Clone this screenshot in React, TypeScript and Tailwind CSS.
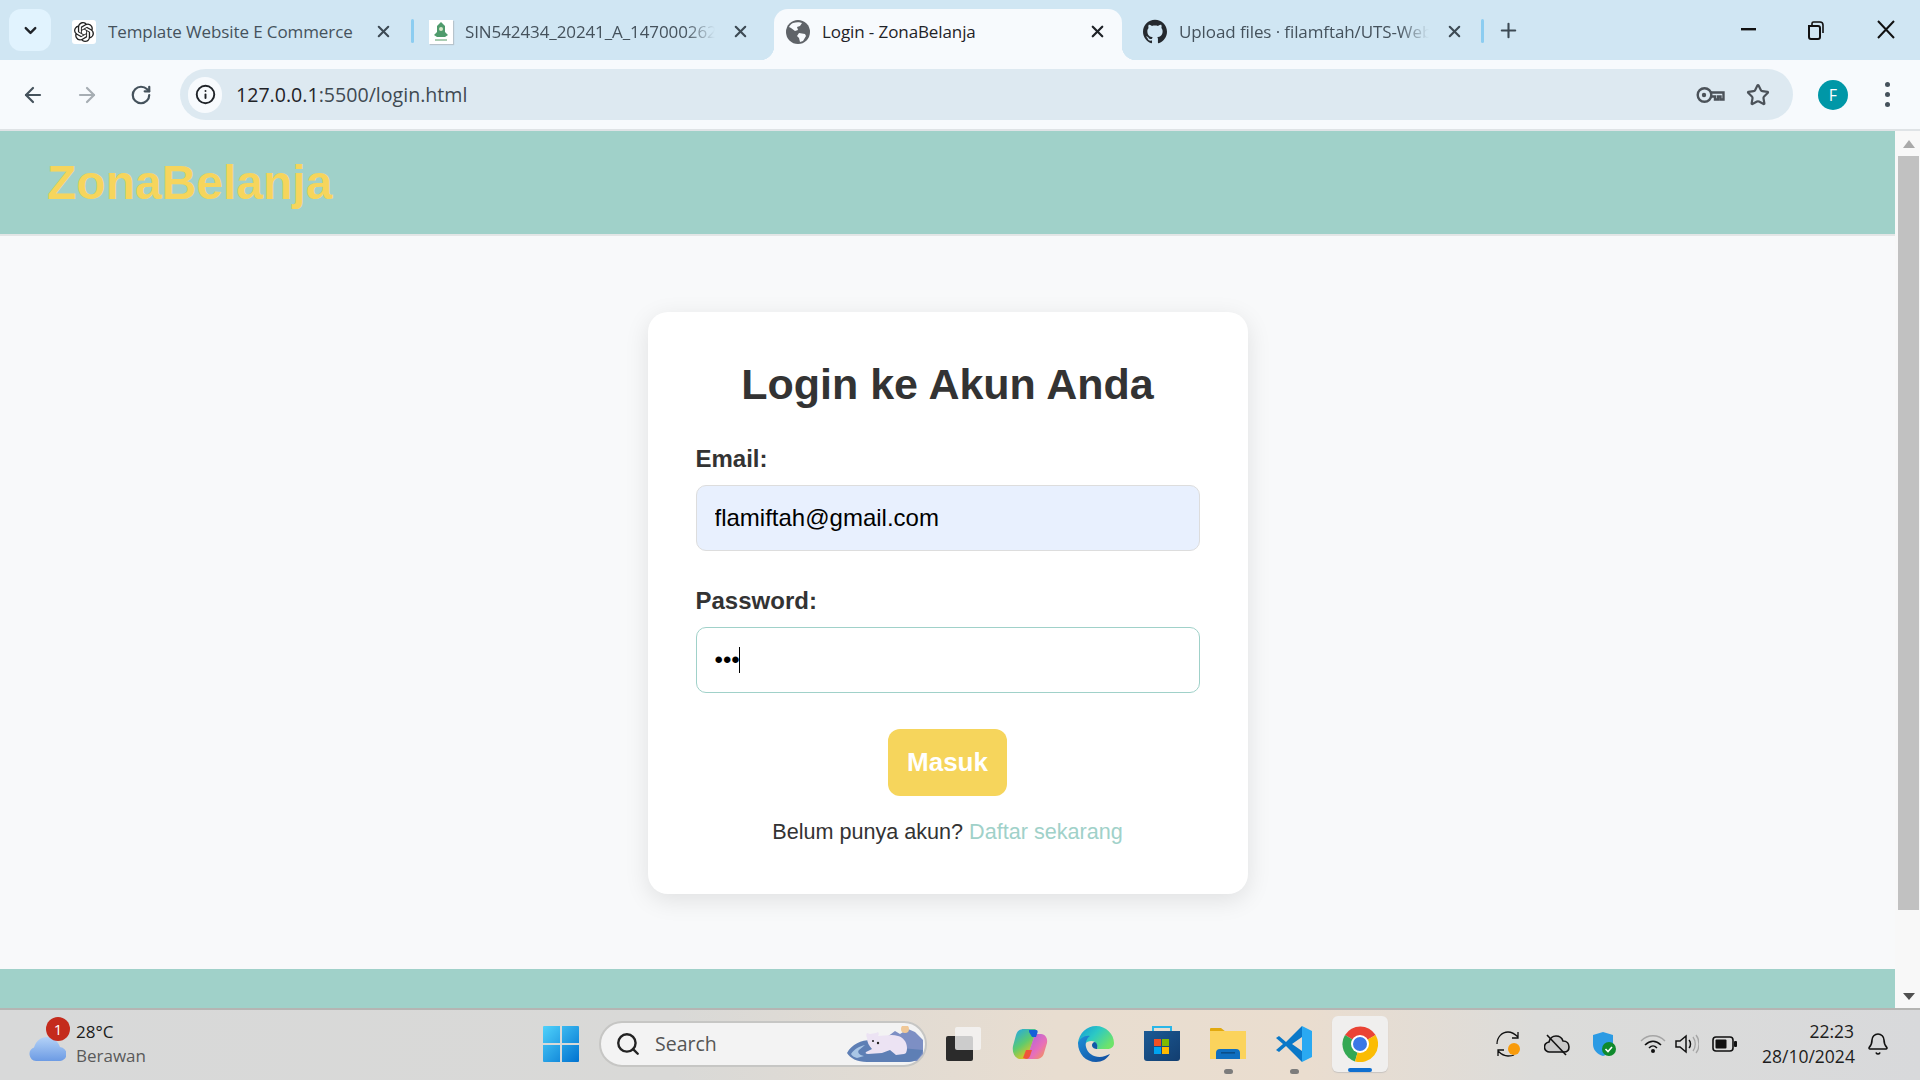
import { ArrowLeft, ArrowRight, ChevronDown, Info, Plus, RotateCw, Search, Star, X, Bell } from "lucide-react";
import { SiOpenai, SiGithub } from "react-icons/si";

const TEAL = "bg-[#a0d1c9]";

function Globe() {
  return (
    <svg width="24" height="24" viewBox="0 0 24 24">
      <circle cx="12" cy="12" r="12" fill="#5f6368" />
      <path d="M7 3c3-1 7-1 9 0l-2 3-3 1 1 3-3 1-4-3-2-1c1-2 2-3 4-4z" fill="#f7fafd" />
      <path d="M13 13l6 1 1 2-3 5-3 1-1-4-2-2 2-3z" fill="#f7fafd" />
    </svg>
  );
}

function UnimaFavicon() {
  return (
    <div className="flex h-6 w-6 items-center justify-center bg-white shadow-[1px_1px_1px_#b7c4cc]">
      <svg width="18" height="22" viewBox="0 0 18 22">
        <path d="M9 1l4 4v6l3 3-3 2H5l-3-2 3-3V5z" fill="#4f9b6c" />
        <circle cx="9" cy="8" r="2" fill="#d9e8c8" />
        <rect x="3" y="18" width="12" height="2" fill="#a9cdb2" />
      </svg>
    </div>
  );
}

type TabProps = {
  title: string;
  icon: React.ReactNode;
  titleWidth: string;
  closeGap: string;
  fade?: boolean;
};

function Tab({ title, icon, titleWidth, closeGap, fade }: TabProps) {
  return (
    <div className="flex h-[51px] shrink-0 items-center pb-[6px]">
      <div className="flex h-6 w-6 items-center justify-center">{icon}</div>
      <span
        className={`ml-3 overflow-hidden whitespace-nowrap text-[17px] tracking-[-0.1px] text-[#45525c] ${titleWidth} ${
          fade ? "[mask-image:linear-gradient(to_right,black_88%,transparent)]" : ""
        }`}
      >
        {title}
      </span>
      <X size={19} strokeWidth={2.6} className={`text-[#3d4a54] ${closeGap}`} />
    </div>
  );
}

function TabStrip() {
  return (
    <div className="flex h-[60px] shrink-0 items-end bg-[#d0e6f3] font-['Open_Sans',sans-serif]">
      <div className="mb-[9px] ml-[9px] flex h-[42px] w-[42px] items-center justify-center rounded-xl bg-[#e1f3fe]">
        <ChevronDown size={19} strokeWidth={3} className="text-[#1f2328]" />
      </div>
      <div className="ml-[21px]">
        <Tab
          title="Template Website E Commerce"
          icon={
            <div className="flex h-6 w-6 items-center justify-center rounded-[3px] bg-white">
              <SiOpenai size={20} className="text-[#222]" />
            </div>
          }
          titleWidth="w-[252px]"
          closeGap="ml-[14px]"
        />
      </div>
      <div className="mb-[17px] ml-[18px] h-6 w-[3px] rounded-full bg-[#8ccdf1]" />
      <div className="ml-[15px]">
        <Tab
          title="SIN542434_20241_A_147000262"
          icon={<UnimaFavicon />}
          titleWidth="w-[250px]"
          closeGap="ml-4"
          fade
        />
      </div>
      <div className="relative ml-6 flex h-[51px] w-[348px] shrink-0 items-center rounded-t-[14px] bg-[#f7fafd] pb-[6px] pl-[12px]">
        <div className="absolute bottom-0 left-[-14px] h-[14px] w-[14px] bg-[radial-gradient(circle_at_0_0,transparent_14px,#f7fafd_14.5px)]" />
        <div className="absolute bottom-0 right-[-14px] h-[14px] w-[14px] bg-[radial-gradient(circle_at_100%_0,transparent_14px,#f7fafd_14.5px)]" />
        <Globe />
        <span className="ml-3 w-[266px] whitespace-nowrap text-[17px] tracking-[-0.1px] text-[#1f2328]">Login - ZonaBelanja</span>
        <X size={19} strokeWidth={2.8} className="text-[#1f2328]" />
      </div>
      <div className="ml-[21px]">
        <Tab
          title="Upload files · filamftah/UTS-Web"
          icon={<SiGithub size={25} className="text-[#24292e]" />}
          titleWidth="w-[250px]"
          closeGap="ml-4"
          fade
        />
      </div>
      <div className="mb-[17px] ml-[17px] h-6 w-[3px] rounded-full bg-[#8ccdf1]" />
      <Plus size={23} strokeWidth={2.2} className="mb-[18px] ml-[13px] text-[#3d4a54]" />
      <div className="mb-[16px] ml-auto flex items-center">
        <svg width="68" height="28" viewBox="0 0 68 28" className="-mr-[2px]">
          <rect x="27" y="12" width="15" height="2.4" fill="#111" />
        </svg>
        <svg width="68" height="28" viewBox="0 0 68 28">
          <path d="M29 10h9a2 2 0 0 1 2 2v9a2 2 0 0 1-2 2h-7a2 2 0 0 1-2-2z" fill="none" stroke="#111" strokeWidth="2" />
          <path d="M32 9V7.5A1.5 1.5 0 0 1 33.5 6H40a3 3 0 0 1 3 3v8" fill="none" stroke="#111" strokeWidth="1.6" />
        </svg>
        <svg width="70" height="28" viewBox="0 0 70 28" className="mr-[2px]">
          <path d="M30 5l16 17M46 5L30 22" stroke="#111" strokeWidth="2" />
        </svg>
      </div>
    </div>
  );
}

function KeyIcon() {
  return (
    <svg width="29" height="20" viewBox="0 0 29 20" fill="none" stroke="#4b5259" strokeWidth="2.4">
      <circle cx="8.5" cy="10" r="6.8" />
      <circle cx="8" cy="10" r="2.2" fill="#4b5259" stroke="none" />
      <path d="M15 7.5h12.5v7h-3v-3h-2.5v3h-3v-3h-4" />
    </svg>
  );
}

function Toolbar() {
  return (
    <div className="relative flex h-[71px] shrink-0 items-start border-b-2 border-[#dfe3e6] bg-[#f7fafd] pt-[9px] font-['Open_Sans',sans-serif]">
      <div className="flex h-[51px] w-[180px] items-center pl-[21px]">
        <ArrowLeft size={24} strokeWidth={2.2} className="text-[#45525c]" />
        <ArrowRight size={24} strokeWidth={2.2} className="ml-[30px] text-[#a6adb3]" />
        <RotateCw size={22} strokeWidth={2.4} className="ml-[31px] text-[#45525c]" />
      </div>
      <div className="flex h-[51px] w-[1613px] items-center rounded-full bg-[#dde9f1] pl-2">
        <div className="flex h-9 w-[34px] items-center justify-center rounded-full bg-[#f7fafd]">
          <Info size={21} strokeWidth={2.2} className="text-[#1f2328]" />
        </div>
        <span className="ml-[14px] text-[19.6px] text-[#1f2328]">
          127.0.0.1<span className="text-[#3f4a52]">:5500/login.html</span>
        </span>
        <div className="ml-auto flex items-center pr-[23px]">
          <KeyIcon />
          <Star size={24} strokeWidth={2.2} className="ml-[21px] text-[#4b5259]" />
        </div>
      </div>
      <div className="flex h-[51px] items-center">
        <div className="ml-[25px] flex h-[30px] w-[30px] items-center justify-center rounded-full bg-[#0097a7] text-[16px] text-white">
          F
        </div>
        <div className="ml-[37px] flex flex-col gap-[5px]">
          <div className="h-[5px] w-[5px] rounded-full bg-[#45525c]" />
          <div className="h-[5px] w-[5px] rounded-full bg-[#45525c]" />
          <div className="h-[5px] w-[5px] rounded-full bg-[#45525c]" />
        </div>
      </div>
    </div>
  );
}

function Scrollbar() {
  return (
    <div className="flex w-[25px] shrink-0 flex-col items-center bg-[#f8f8f8] pl-[2px]">
      <div className="flex h-[25px] items-center justify-center">
        <div className="h-0 w-0 border-x-[6px] border-b-[8px] border-x-transparent border-b-[#a9a9a9]" />
      </div>
      <div className="h-[754px] w-[21px] bg-[#c1c1c1]" />
      <div className="flex flex-1 items-end justify-center pb-[8px]">
        <div className="h-0 w-0 border-x-[6px] border-t-[7px] border-x-transparent border-t-[#505050]" />
      </div>
    </div>
  );
}

function LoginCard() {
  return (
    <div className="mx-auto mt-[76px] w-[600px] rounded-[20px] bg-white px-12 pb-12 pt-[48px] shadow-[0_6px_24px_rgba(0,0,0,0.1)]">
      <h2 className="text-center text-[43px] font-bold leading-[48px] text-[#333]">Login ke Akun Anda</h2>
      <label className="mt-[37px] block text-[24px] font-bold leading-7 text-[#333]">Email:</label>
      <input
        readOnly
        value="flamiftah@gmail.com"
        className="mt-3 block h-[66px] w-full rounded-[10px] border border-[#ddd] bg-[#e8f0fe] pl-[18px] text-[24px] text-black outline-none"
      />
      <label className="mt-9 block text-[24px] font-bold leading-7 text-[#333]">Password:</label>
      <div className="relative mt-3">
        <input
          readOnly
          type="password"
          value="abc"
          className="block h-[66px] w-full rounded-[10px] border border-[#a0d1c9] bg-white pl-[18px] text-[24px] text-black outline-none"
        />
        <div className="absolute left-[43px] top-5 h-[26px] w-px bg-black" />
      </div>
      <button className="mx-auto mt-9 block h-[67px] w-[119px] rounded-xl bg-[#f6d55c] text-[26px] font-bold text-white">
        Masuk
      </button>
      <p className="mt-[22px] text-center text-[21.6px] leading-7 text-[#333]">
        Belum punya akun? <a className="text-[#a0d1c9]">Daftar sekarang</a>
      </p>
    </div>
  );
}

function Page() {
  return (
    <div className="flex min-h-0 flex-1 font-['Liberation_Sans',sans-serif]">
      <div className="flex min-w-0 flex-1 flex-col bg-[#f8f9fa]">
        <header className={`flex h-[105px] shrink-0 items-center border-b-2 border-[#e3e6e6] pl-[47px] ${TEAL}`}>
          <h1 className="text-[48px] font-bold text-[#f6d55c]">ZonaBelanja</h1>
        </header>
        <main className="flex-1">
          <LoginCard />
        </main>
        <footer className={`h-[39px] shrink-0 ${TEAL}`} />
      </div>
      <Scrollbar />
    </div>
  );
}

function WindowsLogo() {
  return (
    <svg width="36" height="36" viewBox="0 0 36 36">
      <defs>
        <linearGradient id="win" x1="0" y1="0" x2="1" y2="1">
          <stop offset="0" stopColor="#4fd2fb" />
          <stop offset="1" stopColor="#0072d0" />
        </linearGradient>
      </defs>
      <path d="M0 1a1 1 0 0 1 1-1h16v17H0zM19 0h16a1 1 0 0 1 1 1v16H19zM0 19h17v17H1a1 1 0 0 1-1-1zM19 19h17v16a1 1 0 0 1-1 1H19z" fill="url(#win)" />
    </svg>
  );
}

function Bear() {
  return (
    <svg width="76" height="36" viewBox="0 0 76 36" className="ml-auto mr-[2px]">
      <path d="M36 14l12-9 5 3 8-5 7 3 8 8v14l-6 7H30z" fill="#7d8fc4" />
      <circle cx="58" cy="3" r="4" fill="#f0c898" />
      <path d="M0 27C5 18 14 14 24 14l30 8 22 2c-2 8-8 12-14 12H20C10 36 3 32 0 27z" fill="#5e7fb5" />
      <path d="M4 28c3-5 9-8 14-9l-6 5c-2 2 0 5 5 6l-7 2c-3-1-5-2-6-4z" fill="#a9c6e6" />
      <path d="M20 12c-1-2-1-4 0-5l3 1 6-1 2-1c1 1 1 3 0 4 6 0 14-2 20 0 5 1 9 6 9 12 0 3-1 6-3 6l-8 1-6-5-8 3-14 1c-2 0-3-1-2-2l6-3c-3-3-5-7-5-11z" fill="#ece3f3" />
      <circle cx="26" cy="15" r="1" fill="#222" />
      <circle cx="31" cy="17" r="1.2" fill="#222" />
    </svg>
  );
}

function Copilot() {
  return (
    <svg width="36" height="36" viewBox="0 0 36 36">
      <defs>
        <linearGradient id="cpA" x1="0" y1="0" x2="0.6" y2="1">
          <stop offset="0" stopColor="#1ea5f0" />
          <stop offset="0.55" stopColor="#5ecb6e" />
          <stop offset="1" stopColor="#f5c518" />
        </linearGradient>
        <linearGradient id="cpB" x1="0" y1="0" x2="1" y2="1">
          <stop offset="0" stopColor="#a560e8" />
          <stop offset="0.6" stopColor="#e86fb8" />
          <stop offset="1" stopColor="#f5a040" />
        </linearGradient>
      </defs>
      <path d="M12 3h10c2 0 3 1 2 3L16 30c-1 2-2 3-5 3H7C2 31 0 26 1 20l3-11c1-4 4-6 8-6z" fill="url(#cpA)" />
      <path d="M14 33h10c4 0 7-2 8-6l3-10c1-5-2-9-6-9h-6l-6 18c-1 3-1 6-3 7z" fill="url(#cpB)" />
      <path d="M17 4h7c2 0 2 2 1 4l-1 3h-4l-3-5z" fill="#1560d8" />
      <path d="M14 24h6l-2 6c-1 2-2 3-4 3l-3-1z" fill="#f0553a" />
    </svg>
  );
}

function Edge() {
  return (
    <svg width="36" height="36" viewBox="0 0 36 36">
      <defs>
        <linearGradient id="edA" x1="0" y1="0" x2="1" y2="0.6">
          <stop offset="0" stopColor="#1397d8" />
          <stop offset="0.5" stopColor="#2cc9c4" />
          <stop offset="1" stopColor="#6ee36a" />
        </linearGradient>
        <linearGradient id="edB" x1="0" y1="0" x2="1" y2="1">
          <stop offset="0" stopColor="#1f8fd8" />
          <stop offset="1" stopColor="#114a9c" />
        </linearGradient>
      </defs>
      <path d="M0 17C1 7 9 0 18 0c10 0 18 8 18 17 0 4-3 6-7 6H19c1-2 0-5-2-7-3-2-8-1-10 2-2 2-3 3-7-1z" fill="url(#edA)" />
      <path d="M0 17c2-5 7-8 12-7-3 2-5 6-4 11 2 8 11 12 19 9l5-2c-3 5-8 8-14 8C8 36 0 28 0 17z" fill="url(#edB)" />
      <path d="M19 23c-2 0-5-1-5-4 0-1 1-3 3-3 2 1 3 4 2 7z" fill="#0f5aa8" />
    </svg>
  );
}

function Store() {
  return (
    <svg width="36" height="36" viewBox="0 0 36 36">
      <defs>
        <linearGradient id="stA" x1="0" y1="0" x2="1" y2="1">
          <stop offset="0" stopColor="#1c5a94" />
          <stop offset="1" stopColor="#123e70" />
        </linearGradient>
      </defs>
      <path d="M9 6V1h18v5" fill="none" stroke="#29b6e8" strokeWidth="2" />
      <path d="M0 5h36v27a3 3 0 0 1-3 3H3a3 3 0 0 1-3-3z" fill="url(#stA)" />
      <rect x="10" y="13" width="7" height="7" fill="#f25022" />
      <rect x="18" y="13" width="7" height="7" fill="#7fba00" />
      <rect x="10" y="21" width="7" height="7" fill="#00a4ef" />
      <rect x="18" y="21" width="7" height="7" fill="#ffb900" />
    </svg>
  );
}

function Folder() {
  return (
    <svg width="36" height="36" viewBox="0 0 36 36">
      <path d="M0 3a1 1 0 0 1 1-1h10l5 4h20v10H0z" fill="#e2a90e" />
      <rect x="0" y="5" width="36" height="28" fill="#fbd35c" />
      <path d="M6 33V27a4 4 0 0 1 4-4h16a4 4 0 0 1 4 4v6z" fill="#0f6fc0" />
      <rect x="11" y="26" width="14" height="1.6" fill="#0a4e8a" />
    </svg>
  );
}

function VsCode() {
  return (
    <svg width="36" height="36" viewBox="0 0 36 36">
      <path d="M26 0l10 5v26l-10 5z" fill="#2aa9f2" />
      <path d="M26 0L10 16 3 10 0 12l7 6-7 6 3 2 7-6 16 16V25L16 18 26 11z" fill="#0a78c8" />
    </svg>
  );
}

function Chrome() {
  return (
    <svg width="36" height="36" viewBox="0 0 36 36">
      <path d="M18 18L3 9A18 18 0 0 1 33.6 9z" fill="#ea4335" />
      <path d="M18 18L3 9a18 18 0 0 0 10 26.4z" fill="#34a853" />
      <path d="M18 18l15.6-9A18 18 0 0 1 13 35.4z" fill="#fbbc04" />
      <circle cx="18" cy="18" r="9" fill="#fff" />
      <circle cx="18" cy="18" r="7" fill="#3b78e7" />
    </svg>
  );
}

function TaskApp({ children, dot }: { children: React.ReactNode; dot?: boolean }) {
  return (
    <div className="relative flex h-[56px] w-[66px] items-center justify-center">
      {children}
      {dot && <div className="absolute bottom-[-2px] h-[5px] w-[9px] rounded-full bg-[#7c7c7c]" />}
    </div>
  );
}

function Tray() {
  return (
    <div className="ml-auto flex items-center pr-[30px]">
      <svg width="26" height="26" viewBox="0 0 26 26" fill="none" stroke="#111" strokeWidth="1.3">
        <path d="M1 13C1 6 6 1 12 1c4 0 7 2 10 5M22 1v6h-6" />
        <path d="M18 24c-2 1-4 1-6 1-4 0-7-2-10-5M2 25v-6h6" />
        <circle cx="18" cy="18" r="6" fill="#f89b0b" stroke="none" />
      </svg>
      <svg width="26" height="24" viewBox="0 0 26 24" className="ml-[22px]">
        <path d="M6 20a5 5 0 0 1-1-10C6 6 9 4 12 4c3 0 6 2 7 5 4 0 6 3 6 6s-2 5-5 5z" fill="#c8c8c8" stroke="#111" strokeWidth="1.6" />
        <path d="M3 3l19 20" stroke="#111" strokeWidth="1.6" />
      </svg>
      <svg width="24" height="26" viewBox="0 0 24 26" className="ml-[22px]">
        <path d="M11 1l10 3v9c0 6-4 10-10 12C5 23 1 19 1 13V4z" fill="#2c9be4" />
        <circle cx="17" cy="18" r="7" fill="#0f8a2c" />
        <path d="M13.5 18l2.5 2.5 4-4.5" fill="none" stroke="#fff" strokeWidth="1.6" />
      </svg>
      <svg width="26" height="20" viewBox="0 0 26 20" fill="none" className="ml-[24px]">
        <path d="M1 7c7-7 17-7 24 0" stroke="#a5a5a5" strokeWidth="1.4" />
        <path d="M5 11c5-5 11-5 16 0" stroke="#111" strokeWidth="1.6" />
        <path d="M9 14c3-3 5-3 8 0" stroke="#111" strokeWidth="1.6" />
        <circle cx="13" cy="17" r="2" fill="#111" />
      </svg>
      <svg width="24" height="22" viewBox="0 0 24 22" fill="none" className="ml-[9px]">
        <path d="M1 8h4l6-5v16l-6-5H1z" stroke="#111" strokeWidth="1.5" />
        <path d="M14 7c2 2 2 6 0 8" stroke="#111" strokeWidth="1.5" />
        <path d="M18 4c3 4 3 10 0 14M21 2c4 5 4 13 0 18" stroke="#a5a5a5" strokeWidth="1.3" />
      </svg>
      <svg width="25" height="16" viewBox="0 0 25 16" className="ml-[13px]">
        <rect x="1" y="1" width="20" height="14" rx="3" fill="none" stroke="#111" strokeWidth="1.6" />
        <rect x="3.5" y="3.5" width="11" height="9" rx="1" fill="#111" />
        <rect x="22" y="5" width="3" height="6" rx="1" fill="#111" />
      </svg>
      <div className="ml-[25px] w-[92px] text-right text-[17.5px] leading-[25px] text-[#1d1d1d]">
        <div>22:23</div>
        <div className="whitespace-nowrap">28/10/2024</div>
      </div>
      <Bell size={24} strokeWidth={1.6} className="ml-[12px] text-[#111]" />
    </div>
  );
}

function Taskbar() {
  return (
    <div className="flex h-[72px] shrink-0 items-center border-t-2 border-[#b5b5b3] bg-[linear-gradient(to_right,#d8d9d9_0%,#d9d9d7_35%,#e8ddd0_55%,#eaddcf_68%,#dcdcda_80%,#d8d9db_100%)] pb-[2px] font-['Open_Sans',sans-serif]">
      <div className="relative ml-[29px] flex w-[514px] items-center">
        <svg width="37" height="26" viewBox="0 0 37 26" className="mb-[-8px]">
          <defs>
            <linearGradient id="cloud" x1="0" y1="0" x2="0" y2="1">
              <stop offset="0" stopColor="#b4d2f7" />
              <stop offset="1" stopColor="#6c9be4" />
            </linearGradient>
          </defs>
          <path d="M7 26a7 7 0 0 1-2-13.5C7 6 12 2 18 2c6 0 11 4 13 10a7 7 0 0 1-1 14z" fill="url(#cloud)" />
        </svg>
        <div className="absolute left-[17px] top-[-3px] flex h-6 w-6 items-center justify-center rounded-full bg-[#c42b1c] text-[15px] text-white">
          1
        </div>
        <div className="ml-[10px] text-[17px] leading-6">
          <div className="text-[#1d1d1d]">28°C</div>
          <div className="text-[#5a5a5a]">Berawan</div>
        </div>
      </div>
      <WindowsLogo />
      <div className="ml-5 flex h-[46px] w-[328px] items-center rounded-full border-2 border-[#c6c6c4] bg-[#f3f3f3] pl-[14px]">
        <Search size={26} strokeWidth={2.2} className="text-[#222]" />
        <span className="ml-[14px] text-[19.5px] text-[#555]">Search</span>
        <Bear />
      </div>
      <div className="ml-[19px] flex w-[51px] items-center">
        <div className="relative h-[34px] w-[35px]">
          <div className="absolute bottom-0 left-0 h-[25px] w-[27px] rounded-[2px] bg-[#2b2b2b]" />
          <div className="absolute right-0 top-0 h-[23px] w-[26px] rounded-[2px] bg-[#f5f5f5]/80" />
        </div>
      </div>
      <TaskApp><Copilot /></TaskApp>
      <TaskApp><Edge /></TaskApp>
      <TaskApp><Store /></TaskApp>
      <TaskApp dot><Folder /></TaskApp>
      <TaskApp dot><VsCode /></TaskApp>
      <div className="relative ml-[5px] flex h-[56px] w-[56px] items-center justify-center rounded-md bg-[#f0efee] shadow-[0_1px_1px_#c8c4c0]">
        <Chrome />
        <div className="absolute bottom-0 h-1 w-6 rounded-full bg-[#0f6fd0]" />
      </div>
      <Tray />
    </div>
  );
}

export default function App() {
  return (
    <div className="flex h-screen w-full flex-col overflow-hidden">
      <TabStrip />
      <Toolbar />
      <Page />
      <Taskbar />
    </div>
  );
}
